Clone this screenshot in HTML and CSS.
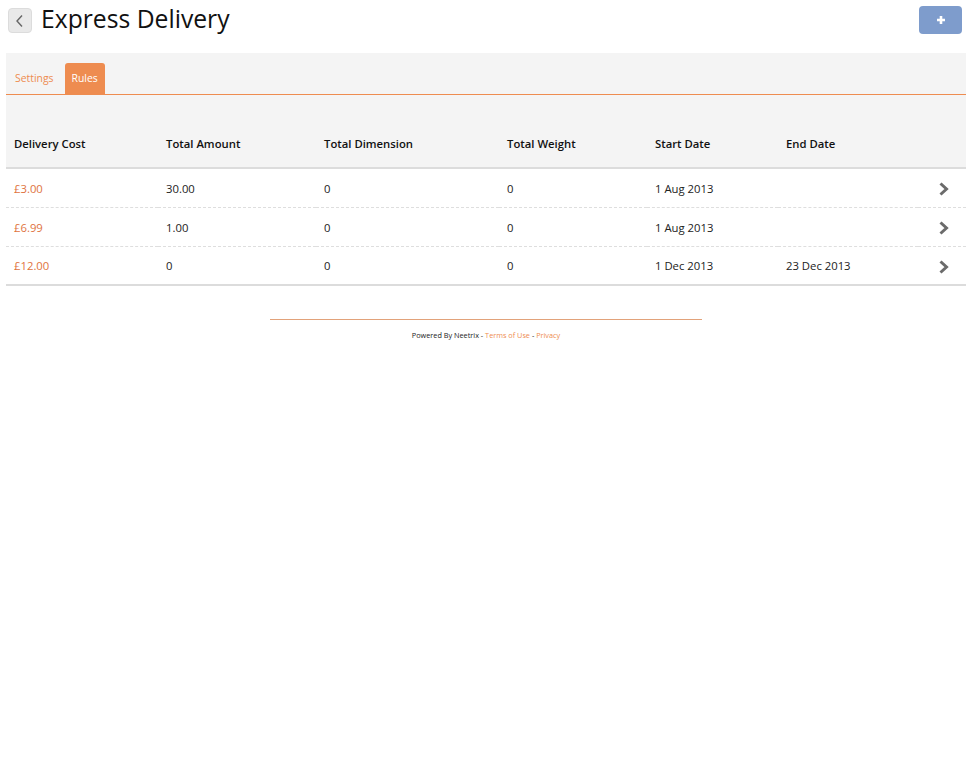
FILE: index.html
```html
<!DOCTYPE html>
<html>
<head>
<meta charset="utf-8">
<link rel="stylesheet" href="styles.css">
</head>
<body>
<div class="page">
  <header class="head">
    <div class="title-wrap">
      <a class="back" href="#"><svg width="10" height="14" viewBox="0 0 10 14"><path d="M7 1.5 L2 7 L7 12.5" fill="none" stroke="#666" stroke-width="1.4"/></svg></a>
      <h1 class="title">Express Delivery</h1>
    </div>
    <a class="add" href="#"><svg width="10" height="10" viewBox="0 0 10 10"><path d="M5 1V9M1 5H9" stroke="#fff" stroke-width="2.6"/></svg></a>
  </header>
  <nav class="tabs">
    <a class="tab" href="#">Settings</a>
    <a class="tab active" href="#">Rules</a>
  </nav>
  <table class="grid">
    <thead>
      <tr>
        <th class="c1">Delivery Cost</th>
        <th class="c2">Total Amount</th>
        <th class="c3">Total Dimension</th>
        <th class="c4">Total Weight</th>
        <th class="c5">Start Date</th>
        <th class="c6">End Date</th>
        <th class="c7"></th>
      </tr>
    </thead>
    <tbody>
      <tr>
        <td class="cost">£3.00</td><td>30.00</td><td>0</td><td>0</td><td>1 Aug 2013</td><td></td>
        <td class="go"><svg width="12" height="14" viewBox="0 0 12 14"><path d="M2.5 1.5 L8.5 7 L2.5 12.5" fill="none" stroke="#6b6b6b" stroke-width="3"/></svg></td>
      </tr>
      <tr>
        <td class="cost">£6.99</td><td>1.00</td><td>0</td><td>0</td><td>1 Aug 2013</td><td></td>
        <td class="go"><svg width="12" height="14" viewBox="0 0 12 14"><path d="M2.5 1.5 L8.5 7 L2.5 12.5" fill="none" stroke="#6b6b6b" stroke-width="3"/></svg></td>
      </tr>
      <tr>
        <td class="cost">£12.00</td><td>0</td><td>0</td><td>0</td><td>1 Dec 2013</td><td>23 Dec 2013</td>
        <td class="go"><svg width="12" height="14" viewBox="0 0 12 14"><path d="M2.5 1.5 L8.5 7 L2.5 12.5" fill="none" stroke="#6b6b6b" stroke-width="3"/></svg></td>
      </tr>
    </tbody>
  </table>
  <footer class="foot">
    <div class="foot-line"></div>
    <p class="foot-text">Powered By Neetrix - <a href="#">Terms of Use</a> - <a href="#">Privacy</a></p>
  </footer>
</div>
</body>
</html>
```
FILE: styles.css
```css
* { box-sizing: border-box; }
body {
  margin: 0;
  background: #fff;
  font-family: "Open Sans", "Noto Sans", sans-serif;
  color: #222;
}
.page {
  padding: 0 7px 0 6px;
}
.head {
  display: flex;
  justify-content: space-between;
  align-items: flex-start;
  height: 53px;
  padding-top: 6px;
}
.title-wrap {
  display: flex;
  align-items: center;
  gap: 9px;
  padding-left: 2px;
}
.back {
  display: flex;
  align-items: center;
  justify-content: center;
  width: 24px;
  height: 25px;
  margin-top: 1px;
  background: #e9e9e9;
  border: 1px solid #dcdcdc;
  border-radius: 4px;
}
.title {
  margin: 0 0 2px;
  font-size: 24.7px;
  font-weight: 400;
  line-height: 26px;
  color: #111;
}
.add {
  display: flex;
  align-items: center;
  justify-content: center;
  width: 43px;
  height: 28px;
  margin-right: 4px;
  background: #7e9ccc;
  border-radius: 4px;
}
.tabs {
  display: flex;
  align-items: flex-end;
  height: 42px;
  padding: 10px 0 0 0;
  background: #f4f4f4;
  border-bottom: 1px solid #ee8c50;
}
.tab {
  display: block;
  height: 31px;
  line-height: 30px;
  padding: 0 8px 0 9px;
  font-size: 10.4px;
  color: #ee8c50;
  text-decoration: none;
  border-radius: 3px 3px 0 0;
}
.tab.active {
  margin-left: 3px;
  padding: 0 7px;
  background: #ee8c50;
  color: #fff;
}
.grid {
  width: 100%;
  border-collapse: collapse;
  font-size: 11.3px;
}
.grid th {
  height: 73px;
  padding: 24px 8px 0;
  text-align: left;
  font-weight: 600;
  color: #111;
  background: #f4f4f4;
  border-bottom: 2px solid #dcdcdc;
}
.grid .c1 { width: 152px; }
.grid .c2 { width: 158px; }
.grid .c3 { width: 183px; }
.grid .c4 { width: 148px; }
.grid .c5 { width: 131px; }
.grid .c6 { width: 140px; }
.grid td {
  height: 39px;
  padding: 1px 8px 0;
  color: #222;
  border-bottom: 1px dashed #dedede;
}
.grid tbody tr:last-child td {
  border-bottom: 2px solid #dcdcdc;
}
.grid td.cost { color: #e0733e; }
.grid td.go {
  text-align: right;
  padding-right: 16px;
}
.grid td.go svg { display: inline-block; vertical-align: middle; }
.foot {
  display: flex;
  flex-direction: column;
  align-items: center;
  padding-top: 33px;
}
.foot-line {
  width: 432px;
  height: 1px;
  background: #e2a27a;
}
.foot-text {
  margin: 10px 0 0;
  font-size: 7.3px;
  color: #222;
}
.foot-text a {
  color: #ee8c50;
  text-decoration: none;
}
```
